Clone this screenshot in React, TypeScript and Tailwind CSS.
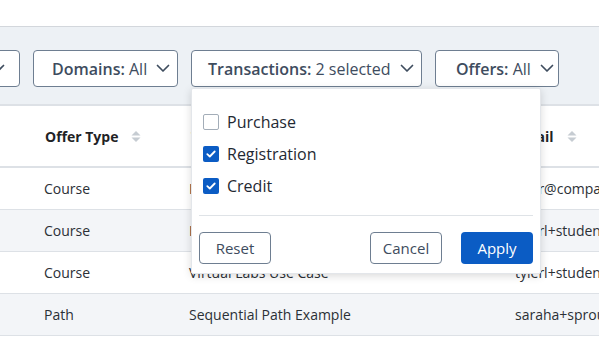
import React from 'react';

const Chevron = () => (
  <svg width="14" height="9" viewBox="0 0 14 9" fill="none" className="shrink-0">
    <path d="M1.5 1.5L7 7L12.5 1.5" stroke="#3e4c5e" strokeWidth="1.7" strokeLinecap="round" strokeLinejoin="round" />
  </svg>
);

const SortIcon = () => (
  <svg width="10" height="11" viewBox="0 0 10 11" className="shrink-0">
    <path d="M5 0L9.5 4.5H0.5Z" fill="#c6ccd2" />
    <path d="M5 11L9.5 6.5H0.5Z" fill="#c6ccd2" />
  </svg>
);

const FilterButton = ({ label, value, className = '' }: { label: string; value: string; className?: string }) => (
  <button className={`h-[37px] shrink-0 flex items-center gap-[9px] pl-[16px] pr-[10px] border border-[#6e7e91] rounded-[4px] bg-white text-[16px] text-[#3e4c5e] ${className}`}>
    <span className="whitespace-nowrap">
      <span className="font-semibold">{label}:</span> {value}
    </span>
    <Chevron />
  </button>
);

const Check = ({ checked, label }: { checked: boolean; label: string }) => (
  <label className="h-[32px] flex items-center gap-[8px]">
    {checked ? (
      <span className="w-[16px] h-[16px] rounded-[2px] bg-[#0b5cc4] flex items-center justify-center">
        <svg width="10" height="8" viewBox="0 0 10 8" fill="none">
          <path d="M1.3 4.2L3.8 6.5L8.7 1.5" stroke="white" strokeWidth="1.8" strokeLinecap="round" strokeLinejoin="round" />
        </svg>
      </span>
    ) : (
      <span className="w-[16px] h-[16px] rounded-[2px] border border-[#a3adb8] bg-white" />
    )}
    <span className="text-[16px] text-[#1f2933]">{label}</span>
  </label>
);

const rows = [
  { type: 'Course', name: 'Intro to Cloud Security', email: 'tyler@company.com' },
  { type: 'Course', name: 'Intro to Data Pipelines', email: 'tylerl+student1@company.com' },
  { type: 'Course', name: 'Virtual Labs Use Case', email: 'tylerl+student2@company.com' },
  { type: 'Path', name: 'Sequential Path Example', email: 'saraha+sprout@company.com' },
];

export default function App() {
  return (
    <div className="w-[599px] h-[343px] overflow-hidden bg-white relative font-['Open_Sans',sans-serif]">
      <div className="h-[27px] bg-white border-b border-[#d3d7dc]" />

      {/* Filters */}
      <div className="h-[79px] bg-[#edf1f5] border-b-2 border-[#dde1e6] pt-[23px] flex items-start gap-[13px] relative z-10">
        <FilterButton label="Status" value="All" className="-ml-[110px] w-[130px]" />
        <FilterButton label="Domains" value="All" className="w-[145px] pl-[18px]" />
        <div className="relative shrink-0">
          <FilterButton label="Transactions" value="2 selected" className="w-[231px]" />
          <div className="absolute left-0 top-full mt-[1px] w-[350px] bg-white border border-[#e3e6ea] rounded-[2px] shadow-[0_2px_8px_rgba(0,0,0,0.15)] pt-[17px] pb-[9px]">
            <div className="px-[11px] flex flex-col">
              <Check checked={false} label="Purchase" />
              <Check checked label="Registration" />
              <Check checked label="Credit" />
            </div>
            <div className="mx-[7px] mt-[13px] border-t border-[#dfe3e7]" />
            <div className="flex items-center mt-[16px] px-[7px]">
              <button className="w-[72px] h-[32px] border border-[#6e7e91] rounded-[4px] text-[15px] text-[#3e4c5e]">Reset</button>
              <button className="ml-auto w-[72px] h-[32px] border border-[#6e7e91] rounded-[4px] text-[15px] text-[#3e4c5e]">Cancel</button>
              <button className="ml-[19px] w-[72px] h-[32px] rounded-[4px] bg-[#0b5cc4] text-[15px] text-white">Apply</button>
            </div>
          </div>
        </div>
        <FilterButton label="Offers" value="All" className="w-[124px] pl-[20px]" />
      </div>

      {/* Table */}
      <div className="text-[14px] text-[#2b3036]">
        <div className="h-[62px] flex items-center border-b-2 border-[#dde1e6] font-bold text-[#1f2326] whitespace-nowrap">
          <div className="w-[173px] shrink-0 pl-[45px] flex items-center gap-[13px]">
            Offer Type <SortIcon />
          </div>
          <div className="w-[326px] shrink-0 pl-[18px] flex items-center gap-[13px]">
            Title <SortIcon />
          </div>
          <div className="shrink-0 pl-[16px] flex items-center gap-[13px]">
            Email <SortIcon />
          </div>
        </div>
        {rows.map((r, i) => (
          <div key={i} className={`h-[42px] flex items-center border-b border-[#dde1e6] whitespace-nowrap ${i % 2 === 1 ? 'bg-[#f3f5f8]' : 'bg-white'}`}>
            <div className="w-[173px] pl-[44px] shrink-0">{r.type}</div>
            <div className="w-[326px] pl-[16px] shrink-0">{r.name}</div>
            <div className="shrink-0 pl-[16px]">{r.email}</div>
          </div>
        ))}
      </div>
    </div>
  );
}
